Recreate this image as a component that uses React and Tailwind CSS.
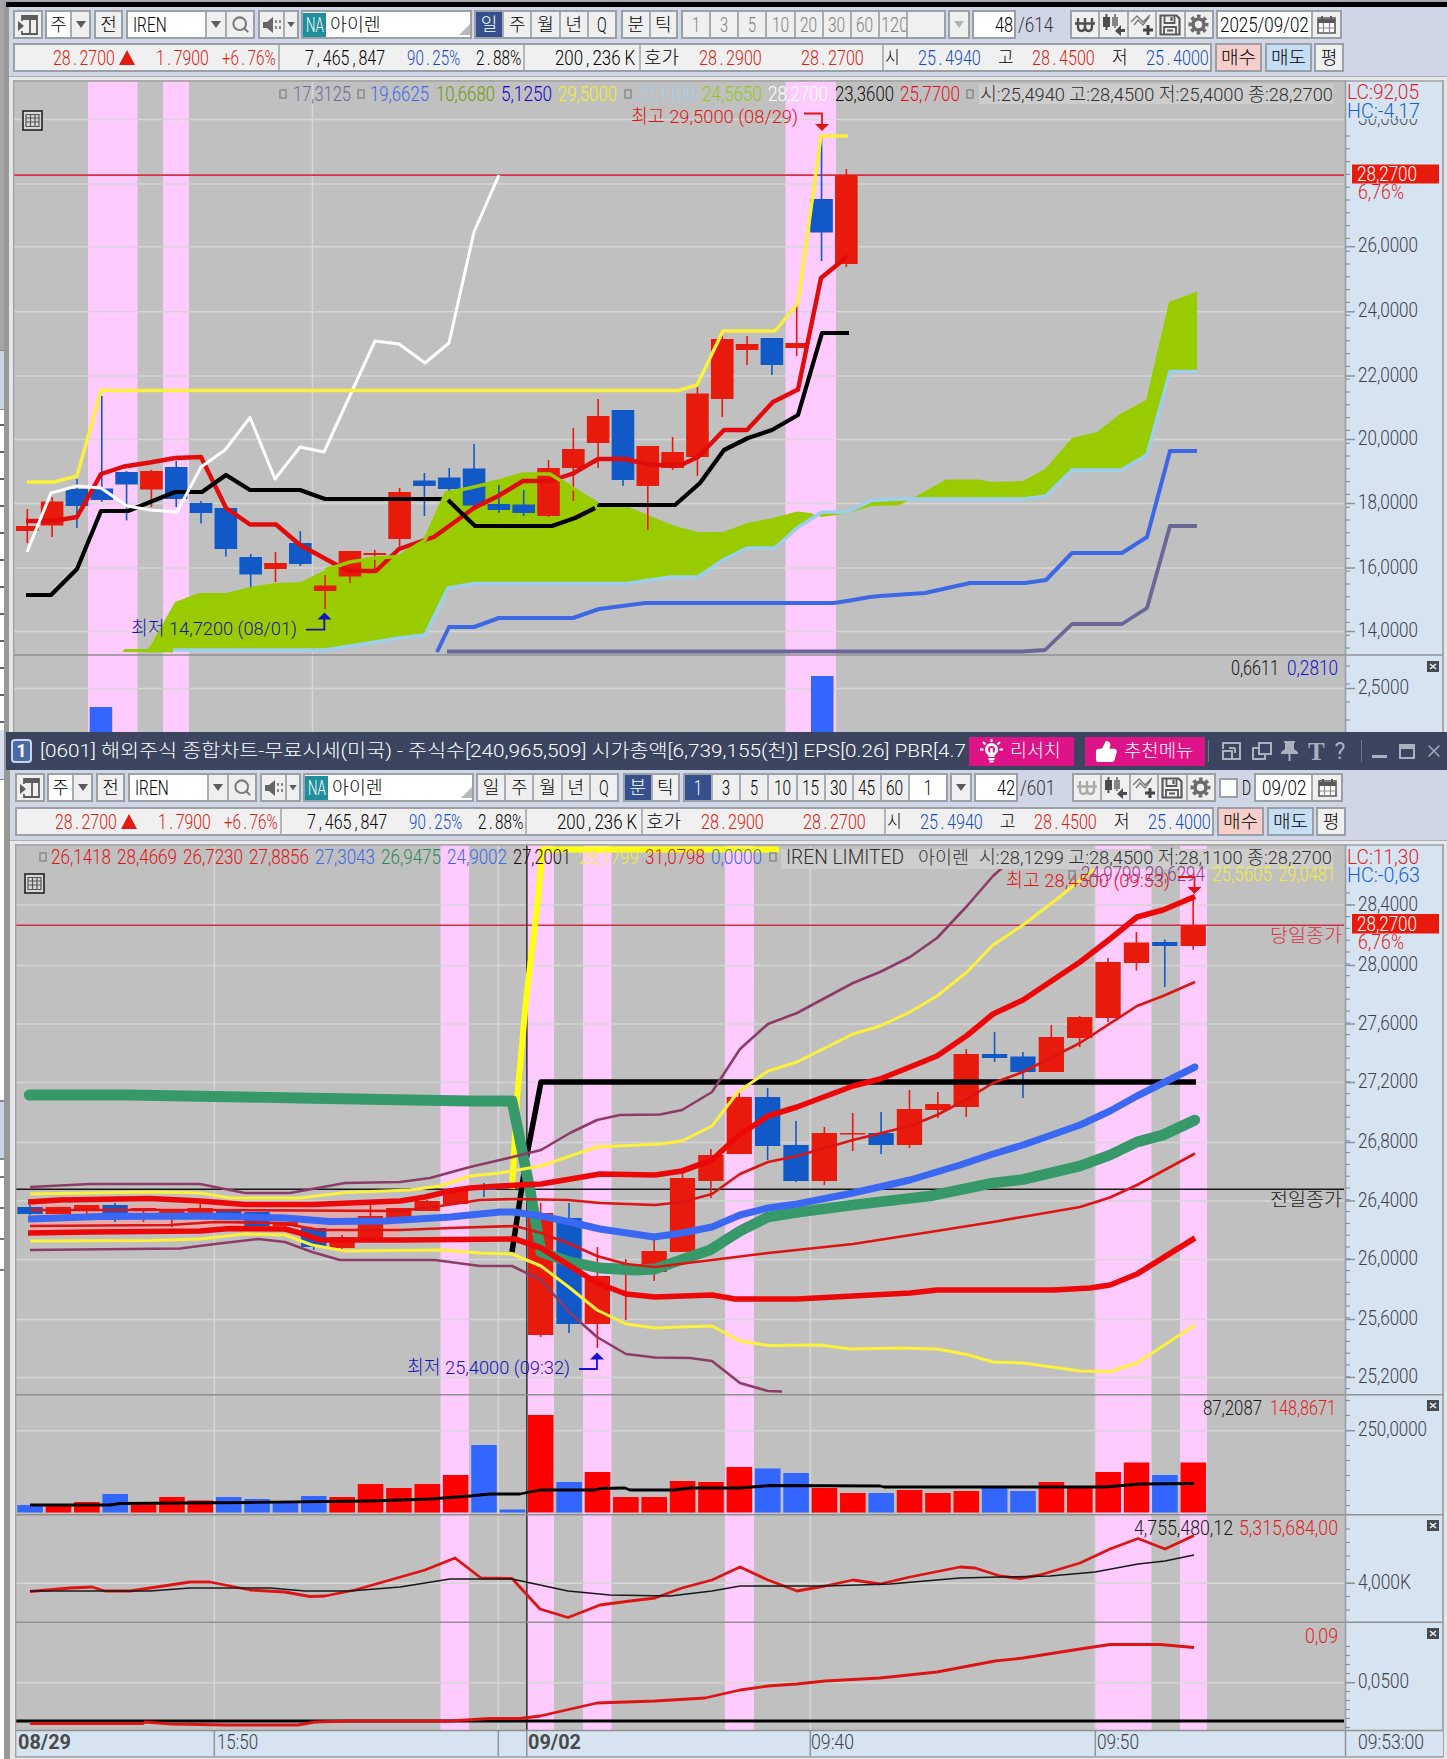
import React, { useLayoutEffect, useRef, useState } from "react";
import { Search, ThumbsUp, X } from "lucide-react";
import clsx from "clsx";

const FONT = "font-['Roboto','Noto_Sans_CJK_KR',sans-serif] font-light";
const RED = "#e81a0c";
const BLUE = "#1259c8";

/* Text squeezed into the width of its box; mono gives points and commas a full digit cell */
function Fit({ className, children, size = "text-[20px]", mono }) {
  const box = useRef(null);
  const span = useRef(null);
  const [scale, setScale] = useState(1);
  useLayoutEffect(() => {
    setScale(box.current.clientWidth / span.current.offsetWidth);
  }, [children]);
  const content = mono
    ? children.split(/([.,])/).map((s, i) => (s === "." || s === "," ? <span key={i} className="inline-block w-[0.56em] text-center">{s}</span> : s))
    : children;
  return (
    <div ref={box} className={clsx("shrink-0 h-full flex items-center", className)}>
      <span ref={span} className={clsx("whitespace-pre origin-left leading-none", size)} style={{ transform: `scaleX(${scale})` }}>
        {content}
      </span>
    </div>
  );
}

function Group({ className, children }) {
  return (
    <div className={clsx("shrink-0 h-[29px] flex border-2 border-[#9b9fa6] divide-x-2 divide-[#a9acb2] bg-[#efefef] overflow-hidden", className)}>
      {children}
    </div>
  );
}

function Cell({ className, on, children }) {
  return (
    <div className={clsx("flex items-center justify-center overflow-hidden", className || "flex-1", on && "bg-[#36508e] text-white")}>
      {children}
    </div>
  );
}

const Down = ({ dim }) => (
  <svg width="12" height="8" viewBox="0 0 12 8"><path d="M1 0h10L6 7z" fill={dim ? "#b4b4b4" : "#5c5c5c"} /></svg>
);

function PanelIcon() {
  return (
    <svg width="22" height="22" viewBox="0 0 22 22" fill="none" stroke="#5c5c5c" strokeWidth="1.800">
      <path d="M5 7V2h15v18H5v-3M13 5v15" />
      <path d="M5 4h15" strokeWidth="4" />
      <path d="M1 7v10l6-5z" fill="#5c5c5c" stroke="none" />
    </svg>
  );
}

function SpeakerIcon() {
  return (
    <svg width="20" height="18" viewBox="0 0 20 18">
      <path d="M1 6h4l6-5v16l-6-5H1z" fill="#666" />
      <path d="M13 4h2v3h-2zM17 4h2v3h-2zM13 10h2v3h-2zM17 10h2v3h-2z" fill="#8a8a8a" />
    </svg>
  );
}

function CalendarIcon() {
  return (
    <svg width="19" height="18" viewBox="0 0 19 18">
      <path d="M1 2h17v15H1z" fill="#fff" stroke="#5a5a5a" strokeWidth="1.600" />
      <path d="M1 3h17v4H1z" fill="#5a5a5a" />
      <path d="M1 12h17M6.500 7v10M12.500 7v10" stroke="#8a8a8a" strokeWidth="1.200" />
      <path d="M5 0v4M14 0v4" stroke="#5a5a5a" strokeWidth="2" />
    </svg>
  );
}

function WonIcon({ dim }) {
  return (
    <svg width="22" height="18" viewBox="0 0 22 18" fill="none" stroke={dim ? "#aaa" : "#505050"} strokeWidth="2.400">
      <path d="M4 2v8q0 5 3.500 5T11 10V2M11 10q0 5 3.500 5T18 10V2M1 7.500h20" />
    </svg>
  );
}

function CandleIcon() {
  return (
    <svg width="24" height="23" viewBox="0 0 24 23">
      <path d="M1 4h7v10H1zM3.500 1h2v16h-2z" fill="#4c4c4c" />
      <path d="M10 4h6v9h-6zM12 1h2v14h-2z" fill="#858585" />
      <path d="M23 16h-4v-4l-6 6 6 5v-4h4z" fill="#4c4c4c" />
    </svg>
  );
}

function WaveIcon() {
  return (
    <svg width="24" height="23" viewBox="0 0 24 23" fill="none">
      <path d="M1 9l6-6 6 6 7-7M4 12l4-5 5 5 6-8" stroke="#777" strokeWidth="1.300" />
      <path d="M18 12v10M13 17h10" stroke="#444" strokeWidth="3" />
    </svg>
  );
}

function DiskIcon() {
  return (
    <svg width="22" height="22" viewBox="0 0 22 22" fill="none" stroke="#5a5a5a" strokeWidth="2.200">
      <path d="M1.500 1.500h16l3 3v16h-19z" />
      <path d="M5.500 2v7h10V2M5 20v-7h12v7M8 16.500h6" strokeWidth="1.800" />
      <path d="M12.500 3v4" />
    </svg>
  );
}

function GearIcon() {
  return (
    <svg width="21" height="21" viewBox="0 0 21 21" fill="none" stroke="#6a6a6a">
      <circle cx="10.500" cy="10.500" r="5.500" strokeWidth="3.600" />
      <circle cx="10.500" cy="10.500" r="8.400" strokeWidth="3.200" strokeDasharray="3.600 2.997" strokeDashoffset="1.800" />
    </svg>
  );
}

function BulbIcon() {
  return (
    <svg width="25" height="25" viewBox="0 0 25 25" fill="none" stroke="#fff" strokeWidth="2">
      <circle cx="12.500" cy="10.500" r="5" strokeWidth="3" />
      <path d="M9.500 17h6M9.500 20h6M10.500 22.500h4M12.500 0v3M1 10.500h3.500M20.500 10.500H24M4 3l2.500 2.500M21 3l-2.500 2.500" />
      <path d="M12.500 9v8" strokeWidth="2.600" />
    </svg>
  );
}

function Toolbar({ minute }) {
  const periods = ["일", "주", "월", "년", "Q"];
  const steps = minute ? ["1", "3", "5", "10", "15", "30", "45", "60"] : ["1", "3", "5", "10", "20", "30", "60", "120"];
  return (
    <div className="flex items-center text-[20px] text-black leading-none">
      <Group className="w-[30px]"><Cell><PanelIcon /></Cell></Group>
      <Group className="w-[46px] ml-[2px]">
        <Cell className="w-[25px] bg-white text-[18px]">주</Cell>
        <Cell><Down /></Cell>
      </Group>
      <Group className="w-[29px] ml-[3px]"><Cell className="w-full text-[18px]">전</Cell></Group>
      <Group className="w-[129px] ml-[3px]">
        <Cell className="w-[79px] bg-white justify-start!"><Fit className="w-[34px] ml-[5px]">IREN</Fit></Cell>
        <Cell className="w-[20px]"><Down /></Cell>
        <Cell><Search size={19} color="#7c7c7c" strokeWidth={2.6} /></Cell>
      </Group>
      <Group className="w-[41px] ml-[3px]">
        <Cell className="w-[25px]"><SpeakerIcon /></Cell>
        <Cell><div className="scale-75"><Down /></div></Cell>
      </Group>
      <Group className="w-[171px] ml-[2px] bg-white!">
        <div className="relative w-full flex items-center">
          <div className="w-[23px] h-[24px] bg-[#1f8f9b] text-white flex items-center"><Fit className="w-[18px] ml-[3px]">NA</Fit></div>
          <Fit className="w-[51px] ml-[4px]" size="text-[18px]">아이렌</Fit>
          <svg className="absolute right-0 bottom-0.5" width="11" height="11" viewBox="0 0 11 11"><path d="M11 0v11H0z" fill="#b8b8b8" /></svg>
        </div>
      </Group>
      <Group className="w-[143px] ml-[2px]">
        {periods.map((p, i) => (
          <Cell key={p} on={!minute && i === 0}>
            {p === "Q" ? <Fit className="w-[10px]">Q</Fit> : <span className="text-[18px]">{p}</span>}
          </Cell>
        ))}
      </Group>
      <Group className="w-[57px] ml-[4px] text-[18px]">
        <Cell on={minute}>분</Cell>
        <Cell>틱</Cell>
      </Group>
      <Group className={clsx("w-[265px] ml-[3px]", !minute && "text-[#808080]")}>
        {steps.map((s, i) => (
          <Cell key={s} on={minute && i === 0} className={s.length === 3 ? "flex-1 justify-start!" : undefined}>
            <Fit className={s.length === 3 ? "w-[27px] ml-px" : s.length === 2 ? "w-[17px]" : "w-[8px]"}>{s}</Fit>
          </Cell>
        ))}
        <Cell className={clsx("w-[36px]", minute && "bg-white")}>{minute && <Fit className="w-[8px]">1</Fit>}</Cell>
      </Group>
      <Group className="w-[22px] ml-[2px]"><Cell><Down dim={!minute} /></Cell></Group>
      <Group className="w-[44px] ml-[2px] bg-white!"><Fit className="w-[18px] ml-[21px]">{minute ? "42" : "48"}</Fit></Group>
      <Fit className="w-[35px] ml-[2px] text-[#333]">{minute ? "/601" : "/614"}</Fit>
      <Group className="w-[144px] ml-[17px]">
        <Cell><WonIcon dim={minute} /></Cell>
        <Cell><CandleIcon /></Cell>
        <Cell><WaveIcon /></Cell>
        <Cell><DiskIcon /></Cell>
        <Cell><GearIcon /></Cell>
      </Group>
      {minute ? (
        <>
          <div className="w-[19px] h-[20px] ml-[3px] bg-white border-2 border-[#9b9fa6]" />
          <Fit className="w-[9px] ml-[4px]">D</Fit>
          <Group className="w-[89px] ml-[3px]">
            <Cell className="w-[57px] bg-white"><Fit className="w-[44px]">09/02</Fit></Cell>
            <Cell><CalendarIcon /></Cell>
          </Group>
        </>
      ) : (
        <Group className="w-[126px] ml-[2px]">
          <Cell className="w-[95px] bg-white"><Fit className="w-[89px]">2025/09/02</Fit></Cell>
          <Cell><CalendarIcon /></Cell>
        </Group>
      )}
    </div>
  );
}

function QuoteRow() {
  const sep = "w-[2px] h-full bg-[#b2b5ba] shrink-0";
  return (
    <div className="flex mt-[4px] h-[29px]">
      <div className="w-[1199px] h-[29px] flex items-center border-2 border-[#9b9fa6] bg-[#f0f0f0] text-black">
        <Fit mono className="w-[62px] ml-[38px] text-[#dc2010]">28.2700</Fit>
        <svg className="ml-[4px] shrink-0" width="16" height="15" viewBox="0 0 16 15"><path d="M8 0l8 15H0z" fill="#e01c10" /></svg>
        <Fit mono className="w-[53px] ml-[21px] text-[#dc2010]">1.7900</Fit>
        <Fit mono className="w-[54px] ml-[13px] text-[#dc2010]">+6.76%</Fit>
        <div className={clsx(sep, "ml-[2px]")} />
        <Fit mono className="w-[80px] ml-[25px]">7,465,847</Fit>
        <Fit mono className="w-[53px] ml-[22px] text-[#144cc8]">90.25%</Fit>
        <Fit mono className="w-[45px] ml-[16px]">2.88%</Fit>
        <div className={clsx(sep, "ml-[2px]")} />
        <Fit mono className="w-[80px] ml-[30px]">200,236 K</Fit>
        <div className={clsx(sep, "ml-[4px]")} />
        <Fit className="w-[35px] ml-[3px]" size="text-[18px]">호가</Fit>
        <Fit mono className="w-[63px] ml-[20px] text-[#dc2010]">28.2900</Fit>
        <Fit mono className="w-[63px] ml-[39px] text-[#dc2010]">28.2700</Fit>
        <div className={clsx(sep, "ml-[18px]")} />
        <Fit className="w-[15px] ml-[1px]" size="text-[18px]">시</Fit>
        <Fit mono className="w-[63px] ml-[18px] text-[#144cc8]">25.4940</Fit>
        <Fit className="w-[16px] ml-[17px]" size="text-[18px]">고</Fit>
        <Fit mono className="w-[63px] ml-[18px] text-[#dc2010]">28.4500</Fit>
        <Fit className="w-[16px] ml-[17px]" size="text-[18px]">저</Fit>
        <Fit mono className="w-[63px] ml-[18px] text-[#144cc8]">25.4000</Fit>
      </div>
      <Group className="w-[47px] ml-[3px] bg-[#f6cfca]!"><Cell><Fit className="w-[35px]" size="text-[18px]">매수</Fit></Cell></Group>
      <Group className="w-[47px] ml-[3px] bg-[#c5def4]!"><Cell><Fit className="w-[35px]" size="text-[18px]">매도</Fit></Cell></Group>
      <Group className="w-[30px] ml-[2px]"><Cell><span className="text-[18px] leading-none">평</span></Cell></Group>
    </div>
  );
}

/* ---- chart primitives ---- */

function T({ x, y, w, c = "#303030", b, size = 20, children }) {
  return (
    <text x={x} y={y} textLength={w} lengthAdjust="spacingAndGlyphs" fill={c} fontSize={size} fontWeight={b ? 700 : 300} xmlSpace="preserve">
      {children}
    </text>
  );
}

const Line = ({ p, c, w = 2 }) => (
  <polyline points={p} fill="none" stroke={c} strokeWidth={w} strokeLinejoin="round" />
);

const Square = ({ x, y }) => <rect x={x + 1} y={y} width="6" height="8" fill="none" stroke="#8a8a8a" strokeWidth="1.500" />;

function CloseBox({ y }) {
  return (
    <g>
      <rect x="1427" y={y} width="12" height="11" fill="#444a50" />
      <path d={`M1430 ${y + 3}l6 5M1436 ${y + 3}l-6 5`} stroke="#e8eef4" strokeWidth="1.600" />
    </g>
  );
}

function TableIcon({ x, y }) {
  return (
    <g transform={`translate(${x} ${y})`}>
      <rect x="1" y="1" width="19" height="19" fill="#d8d8d8" stroke="#222" strokeWidth="1.600" />
      <path d="M4 4.500h13v12H4zM4 8h13M4 12h13M8.500 4v13M13 4v13" fill="none" stroke="#555" strokeWidth="1.200" />
    </g>
  );
}

function Candles({ data, x0, step, width }) {
  return data.map(([col, top, bottom, high, low], i) => {
    if (!col) return null;
    const x = x0 + step * i;
    const fill = col === "r" ? RED : BLUE;
    return (
      <g key={i} fill={fill}>
        <rect x={x - 0.8} y={high} width="1.600" height={low - high} />
        <rect x={x - width / 2} y={top} width={width} height={bottom - top} />
      </g>
    );
  });
}

function Ticks({ from, to, step }) {
  const ys = [];
  for (let y = from; y < to; y += step) ys.push(y);
  return ys.map((y) => <path key={y} d={`M1346 ${y}h4`} stroke="#8c9299" strokeWidth="1.200" />);
}

function AxisLabel({ y, w = 60, children }) {
  return (
    <g>
      <path d={`M1346 ${y}h9`} stroke="#8c9299" strokeWidth="1.500" />
      <T x={1358} y={y + 5.5} w={w} c="#3c4248">{children}</T>
    </g>
  );
}

const weekly = [
  ["r", 526, 531, 509, 543], ["r", 501.5, 525.5, 497, 537], ["b", 489, 506, 479, 528], ["b", 488.5, 500, 396, 502],
  ["b", 472, 484.5, 471, 520.5], ["r", 471, 489.5, 470, 507], ["b", 467, 499, 461, 507], ["b", 503, 513, 501, 523.5],
  ["b", 508, 549, 508, 556.5], ["b", 557, 574.5, 554, 587], ["r", 563, 569, 552, 582], ["b", 543, 564, 531, 566],
  ["r", 585.5, 591, 575, 609], ["r", 551, 576.5, 551, 583], ["r", 553, 555, 550, 569], ["r", 492, 539, 488, 547],
  ["b", 480.5, 486, 473, 516], ["b", 477.5, 489, 468, 491], ["b", 468.5, 505.5, 444, 507], ["b", 504, 510, 485, 513],
  ["b", 504.5, 513, 490, 516], ["r", 468, 516, 460, 517], ["r", 449, 468, 428, 501], ["r", 416, 443, 399, 468],
  ["b", 410, 480, 410, 486], ["r", 446, 486, 446, 530], ["r", 452, 468, 437, 470], ["r", 393.5, 457, 387, 476],
  ["r", 339, 399, 335, 417], ["r", 344, 350, 336, 365], ["b", 338, 365, 338, 375], ["r", 343, 348, 305, 356],
  ["b", 199, 232.5, 137, 261], ["r", 175, 264, 169, 267],
];

const cloudTop =
  "122,652 125,649 148,649 152,643 175,602 199,593 226,593 250,587 275,583 301,582 325,570 350,562 375,558 399,556.5 425,540 446,493 474,487 499,481 523,473.500 550,473.500 574,489 598,504 624,505 650,516 675,526 698,532 723,532 747,523 773,518 797,511.500 810,513 822,517 847,513.500 872,506 899,505.500 920,494 946,479.500 978,479.500 992,482 1023,481 1045,469 1072,438 1097,432 1120,414 1146,400 1169,302 1197,291.500";
const cloudBottom =
  "173,650 325,650 350,646 375,642 399,638 425,635 448,588 474,583.500 627,583.500 670,577 698,577 723,560 747,548 775,548 797,528 822,512 847,512 872,500.500 899,499 1023,499 1046,496 1072,470 1121,470 1147,455 1170,371.500 1197,371.500";

const topGrid = [[184, ""], [246.7, "26,0000"], [311.8, "24,0000"], [376, "22,0000"], [439.5, "20,0000"], [503.5, "18,0000"], [568, "16,0000"], [631.5, "14,0000"]];

const topLegend = [
  [293, 58, "#6f6b98", "17,3125"], [370, 59, "#3a6ae8", "19,6625"], [436, 59, "#6f9a00", "10,6680"], [501, 51, "#1400c8", "5,1250"],
  [558, 59, "#f4f02a", "29,5000"], [636, 60, "#9ed0ec", "22,1100"], [702, 60, "#94c810", "24,5650"], [768, 60, "#ffffff", "28,2700"],
  [835, 59, "#101010", "23,3600"], [900, 60, "#e01020", "25,7700"],
];

function WeeklyChart() {
  return (
    <svg className="block" width="1434" height="652" viewBox="13 80 1434 652">
      <rect x="13" y="80" width="1434" height="652" fill="#c0c0c0" />
      <rect x="1346" y="80" width="97" height="652" fill="#d6e3f1" />
      <rect x="1444" y="80" width="3" height="652" fill="#e6e6e6" />
      {[[88, 49.5], [163, 26], [785.5, 50.5]].map(([x, w]) => <rect key={x} x={x} y="81" width={w} height="651" fill="#fecbfe" />)}
      {[119.5, ...topGrid.map((g) => g[0]), 688.5].map((y) => <path key={y} d={`M14 ${y}H1344`} stroke="#d6d6d6" strokeWidth="1.500" />)}
      <path d="M312.500 81V732" stroke="#d6d6d6" strokeWidth="1.500" />
      <path d="M14 175.200H1344" stroke="#d8304a" strokeWidth="1.800" />

      <polygon points={`${cloudTop} ${cloudBottom.split(" ").reverse().join(" ")} 173,652.5`} fill="#99cc00" />
      <Line p={cloudBottom} c="#9ccfee" w={3.5} />
      <Candles data={weekly} x0={27.3} step={24.82} width={22.6} />
      <Line c="#3c68e4" w={4} p="437,652 449,627 474,627 499,618 573,618 599,609 645,603 834,603 850,600.500 870,597 880,596 925,593 970,583 1025,583 1046,580 1072,553 1122,553 1147,537 1170,451 1197,451" />
      <Line c="#6a6796" w={3.8} p="447,651.500 1022,651.500 1045,650 1072,624 1122,624 1147,608 1170,526 1197,526" />
      <Line c="#e00c0c" w={4.4} p="26,521 53,521 77,517 101,474 124,466.500 150,462.500 175,458 201,457 226,508 250,524.500 276,524.500 300,545 335,564 350,571 376,571 399,549 425,540 434,537 474,508 499,495.500 523,481 550,481 573,473.500 598,459 625,459 650,465 681,465 698,457 724,430 747,430 773,402 798,389.500 821,278 848,256" />
      <Line c="#000" w={4.2} p="26,595 51,595 77,569 101,511 128,511 175,492 202,492 226,475 250,490 300,490 325,499 443,499" />
      <Line c="#000" w={4.2} p="448,500 475,526 552,526 575,518 595,508" />
      <Line c="#000" w={4.2} p="597,505 675,505 700,483 724,450 748,438 772,430 798,415 822,333 849,333" />
      <Line c="#fff" w={3} p="27,552 51,493 77,486 101,488 127,506 150,510 177,512 201,467 225,450 250,417.500 275,479 300,447 324,452 375,341 399,344 425,363 449,343 474,232 499,175" />
      <Line c="#99cc00" w={3.5} p="325,570 350,562 375,558 399,556.500 425,540 446,493 474,487 499,481 523,474 550,474 574,489 598,504" />
      <Line c="#fbf03a" w={3.4} p="27,482 54,482 77,476 101,390.500 678,390.500 697,385 723,331 775,331 798,303 821,136 848,136" />

      <path d="M14 655H1443" stroke="#909090" strokeWidth="1.600" />
      <rect x="89.700" y="707" width="22.500" height="25" fill="#3366ff" />
      <rect x="811" y="676" width="22.500" height="56" fill="#3366ff" />

      <rect x="979" y="84" width="354" height="20" fill="#cdcdcd" />
      {topLegend.map(([x, w, c, t]) => <T key={t} x={x} y={101} w={w} c={c}>{t}</T>)}
      {[279, 357, 624, 966].map((x) => <Square key={x} x={x} y={90} />)}
      <T x={980} y={101} w={353} size={19}>시:25,4940 고:28,4500 저:25,4000 종:28,2700</T>
      <T x={631} y={123} w={167} c="#e01414" size={19}>최고 29,5000 (08/29)</T>
      <path d="M804 113.500h18v11" fill="none" stroke="#e01414" strokeWidth="1.800" />
      <path d="M815 124h14l-7 7z" fill="#e01414" />
      <T x={131} y={634.5} w={166} c="#1512a8" size={19}>최저 14,7200 (08/01)</T>
      <path d="M306 629.700h18.300v-12" fill="none" stroke="#1512b8" strokeWidth="1.800" />
      <path d="M317.500 619.500h14l-7-7z" fill="#1512c8" />
      <TableIcon x={22} y={110} />
      <T x={1231} y={675} w={48} c="#101010">0,6611</T>
      <T x={1287} y={675} w={51} c="#1512d0">0,2810</T>

      <path d="M1345.500 80V732M1443 80V732" stroke="#9a9fa5" strokeWidth="1.600" />
      <Ticks from={136} to={655} step={12.8} />
      <Ticks from={666} to={732} step={18} />
      {topGrid.slice(1).map(([y, t]) => <AxisLabel key={t} y={y}>{t}</AxisLabel>)}
      <AxisLabel y={688.5} w={51}>2,5000</AxisLabel>
      <T x={1358} y={125} w={60} c="#50565c">30,0000</T>
      <rect x="1347" y="82" width="95" height="37" fill="#d6e3f1" />
      <T x={1347} y={99} w={72} c="#e01c1c">LC:92,05</T>
      <T x={1347} y={117.5} w={73} c="#1b5fd0">HC:-4,17</T>
      <rect x="1352" y="164.500" width="87" height="19" fill={RED} />
      <T x={1357} y={180.5} w={60} c="#fff">28,2700</T>
      <T x={1358} y={199} w={46} c="#e01c1c">6,76%</T>
      <CloseBox y={661} />
      <path d="M13 81H1443M13.600 80V732" stroke="#a2a2a2" strokeWidth="1.600" fill="none" />
    </svg>
  );
}

const minutes = [
  ["b", 1207, 1214, 1205, 1215], ["r", 1207, 1214, 1207, 1214], ["r", 1205, 1210, 1205, 1215], ["b", 1205, 1213, 1203, 1222],
  ["r", 1208, 1210, 1208, 1222], ["r", 1211, 1213, 1211, 1227], ["r", 1208, 1214, 1203, 1214], ["b", 1209, 1215, 1209, 1215],
  ["b", 1212, 1226, 1212, 1226], ["r", 1222, 1226, 1222, 1230], ["b", 1228, 1247, 1228, 1250], ["r", 1237, 1248, 1235, 1250],
  ["r", 1216, 1240, 1203, 1240], ["r", 1208, 1218, 1208, 1218], ["r", 1201, 1211, 1200, 1211], ["r", 1189, 1204, 1187, 1204],
  ["b", 1189, 1190, 1183, 1197], [], ["r", 1213, 1335, 1203, 1337], ["b", 1218, 1324, 1203, 1333],
  ["r", 1276, 1324, 1247, 1348], ["r", 1272, 1274, 1259, 1320], ["r", 1251, 1272, 1240, 1281], ["r", 1178, 1252, 1173, 1252],
  ["r", 1155, 1181, 1149, 1198], ["r", 1097, 1154, 1093, 1154], ["b", 1097, 1146, 1088, 1160], ["b", 1145, 1181, 1121, 1182],
  ["r", 1133, 1181, 1127, 1185], ["r", 1133, 1134.5, 1113, 1151], ["b", 1133, 1145, 1112, 1154], ["r", 1109, 1145, 1090, 1148],
  ["r", 1104, 1110, 1092, 1118], ["r", 1054, 1107, 1049, 1117], ["b", 1054, 1058, 1032, 1062], ["b", 1056.5, 1072, 1052, 1098],
  ["r", 1037, 1072, 1025, 1072], ["r", 1017, 1038, 1016, 1047], ["r", 962, 1018, 958, 1022], ["r", 942.5, 963, 932, 970.5],
  ["b", 942, 946, 939.5, 987], ["r", 925, 946, 896, 949.5],
];

const volumes = [
  1505, 1505, 1502, 1494, 1504, 1497, 1500.5, 1497, 1499, 1502, 1496, 1497, 1484, 1488, 1484, 1475, 1445, 1509.5, 1415, 1482, 1472,
  1497, 1497, 1481, 1482, 1467, 1468.5, 1473, 1488, 1493, 1493, 1490, 1493, 1491, 1488, 1491, 1482, 1487, 1472, 1462.5, 1475, 1462.5,
];
const blueVolumes = [0, 3, 7, 8, 9, 10, 16, 17, 19, 26, 27, 30, 34, 35, 40];

const priceGrid = [[905, "28,4000"], [965.5, "28,0000"], [1024, "27,6000"], [1082.5, "27,2000"], [1142.5, "26,8000"], [1201, "26,4000"], [1259.5, "26,0000"], [1319.5, "25,6000"], [1377.5, "25,2000"]];

const minuteLegend = [
  [51, 60, "#e01414", "26,1418"], [117, 60, "#e01414", "28,4669"], [183, 60, "#e01414", "26,7230"], [249, 60, "#e01414", "27,8856"],
  [315, 60, "#3a6ae8", "27,3043"], [381, 60, "#2c8a58", "26,9475"], [447, 60, "#3a6ae8", "24,9002"], [513, 58, "#101010", "27,2001"],
  [579, 60, "#f0ec48", "28,1799"], [645, 60, "#e01414", "31,0798"], [711, 51, "#3a6ae8", "0,0000"],
];

function MinuteChart() {
  return (
    <svg className="block" width="1432" height="915" viewBox="15 844 1432 915">
      <rect x="15" y="844" width="1432" height="915" fill="#c0c0c0" />
      <rect x="1346" y="844" width="97" height="887" fill="#d6e3f1" />
      <rect x="1444" y="844" width="3" height="915" fill="#e6e6e6" />
      {[[440.5, 28.5], [528, 26], [583, 28.5], [725, 29], [1095, 56.5], [1180, 27]].map(([x, w]) => (
        <rect key={x} x={x} y="845" width={w} height="885" fill="#fecbfe" />
      ))}
      {[...priceGrid.map((g) => g[0]), 1430.7, 1583.3, 1682.7].map((y) => <path key={y} d={`M16 ${y}H1344`} stroke="#d6d6d6" strokeWidth="1.500" />)}
      {[214.3, 498.3, 810.3, 1095.3].map((x) => <path key={x} d={`M${x} 845V1730`} stroke="#d6d6d6" strokeWidth="1.500" />)}
      <path d="M16 925.200H1344" stroke="#cf3048" strokeWidth="1.600" />
      <path d="M16 1189.200H1344" stroke="#181818" strokeWidth="1.600" />
      <path d="M526.800 845V1730" stroke="#403040" strokeWidth="1.500" />

      {/* tint between the bands on the quiet session */}
      <polygon points="30,1204 200,1204 300,1207 400,1204 400,1236 330,1236 290,1226 200,1228 30,1230" fill="#e4acac" />
      <Candles data={minutes} x0={30} step={28.37} width={25.3} />
      <Line c="#ffff10" w={6} p="512,1189 517,1100 526,1000 538,900 542.500,849.500 779,849.500" />
      <Line c="#000" w={5.5} p="512,1252 526,1160 541,1082 1196,1082" />
      <Line c="#37996a" w={10.8} p="28,1095 128,1095 300,1098 412,1100 470,1101 512,1101 520,1140 530,1190 541,1252 570,1262 600,1268 635,1270 655,1269 675,1262 710,1250 740,1231 768,1217 800,1212 853,1205 930,1196 993,1183 1023,1179.500 1080,1166 1110,1155 1137,1142 1163,1135 1195,1120" />
      <circle cx="29" cy="1095" r="5.200" fill="#37996a" />
      <circle cx="1195" cy="1120" r="5.200" fill="#37996a" />
      <Line c="#8c3c66" w={2.6} p="30,1187 90,1184 200,1184 245,1193 290,1193 345,1183 400,1182 430,1178 470,1167 500,1160 541,1150 570,1133 597,1120 620,1115 660,1114.500 682,1110 712,1092 740,1049 768,1024 797,1013 853,983 880,972 910,957 937,938 967,906 993,876 1002,868" />
      <Line c="#8c3c66" w={2.6} p="30,1250 180,1248.500 215,1244 258,1239 285,1242 312,1252 340,1260 435,1260 480,1266 512,1266 541,1280 570,1313 597,1337 626,1354 655,1357.500 690,1358 712,1361 740,1383 768,1391 782,1391.500" />
      <Line c="#fbf03a" w={3} p="30,1194 150,1192 200,1193 230,1198 300,1198 345,1192.500 410,1190 440,1186 470,1176 500,1173 541,1166 570,1156 597,1147 660,1144 682,1141 712,1126 738,1092 768,1071 797,1062 853,1034 880,1026 910,1012 937,996 967,972 993,945 1023,925 1057,899 1095,868" />
      <Line c="#fbf03a" w={3} p="30,1241 150,1240.500 200,1239 245,1234 285,1235 312,1245 345,1251 440,1250 480,1253 512,1254 541,1266 570,1288 597,1310 626,1324 655,1328 680,1327 712,1326 740,1341 768,1345.500 820,1345 850,1349 900,1348 937,1349 967,1354.500 993,1362 1023,1363 1080,1371 1110,1371.500 1137,1363 1195,1325" />
      <Line c="#ec0808" w={5.6} p="28,1202 60,1200 150,1198.500 200,1201 245,1204.500 312,1204.500 400,1201 425,1197 450,1191 470,1188 500,1186 541,1184 600,1174 655,1175 682,1171 712,1160 738,1136 768,1116 797,1107 853,1086 880,1079 910,1067 937,1056 967,1035.500 993,1014 1023,1000 1080,962 1110,939 1137,917 1163,910 1195,896.500" />
      <Line c="#ec0808" w={5.6} p="28,1233 90,1232 200,1231 230,1228.500 285,1229 300,1233 320,1240 400,1240 515,1239 541,1248 570,1266 597,1283 626,1294 655,1297 712,1295 735,1299 797,1299 853,1296 910,1293 937,1290 1053,1290 1090,1288 1110,1285 1137,1274 1195,1238" />
      <Line c="#dc1414" w={2.6} p="30,1210 200,1210 400,1211 440,1206 480,1200 515,1199 568,1200 600,1203 655,1205 682,1202 712,1194 740,1174 768,1162 797,1156 853,1140 910,1126 937,1115 967,1099 993,1083 1023,1072 1080,1043 1137,1006 1163,996 1195,982" />
      <Line c="#dc1414" w={2.6} p="30,1226 170,1225 215,1222 280,1223 320,1230 400,1230 450,1228 515,1226 541,1233 570,1244 597,1256 626,1264 655,1267 712,1260 768,1253 853,1244 930,1232 993,1222 1080,1207 1110,1197.500 1137,1185 1195,1153.500" />
      <Line c="#3b68f2" w={7} p="28,1219 100,1216.500 200,1216 285,1218 330,1221.500 385,1221 450,1217 500,1212 513,1212 541,1216 570,1222 600,1229 654,1237 682,1233 712,1227 740,1215 768,1208 797,1204 853,1193 910,1180 960,1165 993,1154 1023,1145 1080,1125 1110,1111 1137,1096 1163,1083 1195,1067" />
      <circle cx="1195" cy="1067" r="3.400" fill="#3b68f2" />

      {/* volume */}
      {volumes.map((y, i) => (
        <rect key={i} x={30 + 28.37 * i - 12.7} y={y} width="25.600" height={1512.5 - y} fill={blueVolumes.includes(i) ? "#3366ff" : "#ff0000"} />
      ))}
      <Line c="#000" w={2.8} p="30,1505 110,1505 120,1503.500 250,1502.500 370,1501 430,1499 470,1496 490,1494 520,1494 540,1490 595,1490 600,1488.500 625,1488 630,1490 675,1490 690,1488 740,1488 770,1485.500 880,1486 884,1487 1105,1487 1140,1484 1194,1483.500" />

      {/* flow */}
      <Line c="#dc1414" w={2.8} p="30,1591.500 70,1588 92,1587 105,1591 130,1591 170,1585 190,1582 210,1582 250,1590 285,1592 310,1596.500 325,1596 355,1590 390,1580 425,1570 455,1558 481,1578 512,1578.500 540,1609 568,1617.500 600,1605 630,1601 655,1598 682,1588 712,1580 740,1567 768,1580 797,1591 825,1586 853,1580 880,1584 910,1577 960,1567 975,1568 1000,1576 1020,1578.500 1040,1575 1080,1563 1110,1549 1138,1538.500 1165,1549 1194,1535.500" />
      <Line c="#181818" w={1.5} p="30,1591 150,1591 190,1588 270,1588 305,1591 350,1591 400,1587 450,1579 512,1579 568,1591 610,1595 670,1596 712,1591 740,1586 825,1586 890,1584 960,1578 1000,1577 1050,1576 1095,1572 1138,1564 1165,1561 1194,1555" />

      <path d="M16 1721H1344" stroke="#000" strokeWidth="3" />
      <Line c="#dc1414" w={2.8} p="30,1723.500 143,1723.500 145,1722 172,1724 228,1725 298,1725 315,1722 350,1721 450,1721 490,1718.500 520,1718.500 540,1716 597,1703 655,1701 705,1698 740,1690 768,1686 797,1684 825,1681 880,1678 937,1672 995,1661 1023,1658 1080,1649 1110,1644.500 1160,1644.500 1194,1647.500" />

      {[1394.7, 1514.7, 1622.3, 1730.5].map((y) => <path key={y} d={`M15 ${y}H1443`} stroke="#909090" strokeWidth="1.600" />)}

      {/* legends */}
      <rect x="781" y="849" width="552" height="20" fill="#cdcdcd" />
      {minuteLegend.map(([x, w, c, t]) => <T key={t} x={x} y={864} w={w} c={c}>{t}</T>)}
      <Square x={39} y={853} />
      <Square x={769} y={853} />
      <T x={786} y={864} w={118}>IREN LIMITED</T>
      <T x={918} y={864} w={51} size={18}>아이렌</T>
      <T x={979} y={864} w={353} size={19}>시:28,1299 고:28,4500 저:28,1100 종:28,2700</T>
      <T x={1006} y={886.5} w={164} c="#e01414" size={19}>최고 28,4500 (09:53)</T>
      <Square x={1068} y={871} />
      <T x={1081} y={881} w={124} c="#8c3c80">24,9799 29,6294</T>
      <T x={1212} y={881} w={60} c="#f0ec38">25,5605</T>
      <T x={1278} y={881} w={58} c="#f0ec38">29,0481</T>
      <path d="M1178 877h16.500v10" fill="none" stroke="#e01414" strokeWidth="1.800" />
      <path d="M1187.500 887h14l-7 7z" fill="#e01414" />
      <T x={407} y={1374} w={163} c="#1512c0" size={19}>최저 25,4000 (09:32)</T>
      <path d="M579 1369h18v-11" fill="none" stroke="#1512d0" strokeWidth="1.800" />
      <path d="M590 1359.500h14l-7-7z" fill="#1512d0" />
      <T x={1270} y={942} w={72} c="#dc3048" size={18}>당일종가</T>
      <T x={1270} y={1206} w={72} c="#181818" size={18}>전일종가</T>
      <TableIcon x={24} y={873} />
      <T x={1203} y={1415} w={59} c="#181818">87,2087</T>
      <T x={1270} y={1415} w={66} c="#e01c1c">148,8671</T>
      <T x={1134} y={1534.5} w={99} c="#181818">4,755,480,12</T>
      <T x={1239} y={1534.5} w={99} c="#e01c1c">5,315,684,00</T>
      <T x={1305} y={1642.5} w={33} c="#e01c1c">0,09</T>

      {/* right axis */}
      <path d="M1345.500 844V1757M1443 844V1757" stroke="#9a9fa5" strokeWidth="1.600" />
      <Ticks from={893} to={1394} step={11.8} />
      <Ticks from={1400.5} to={1514} step={15} />
      <Ticks from={1529} to={1622} step={13.5} />
      <Ticks from={1646.5} to={1730} step={9} />
      {priceGrid.map(([y, t]) => <AxisLabel key={t} y={y}>{t}</AxisLabel>)}
      <AxisLabel y={1430.7} w={69}>250,0000</AxisLabel>
      <AxisLabel y={1583.3} w={53}>4,000K</AxisLabel>
      <AxisLabel y={1682.7} w={51}>0,0500</AxisLabel>
      <T x={1347} y={864} w={72} c="#e01c1c">LC:11,30</T>
      <T x={1347} y={882} w={73} c="#1b5fd0">HC:-0,63</T>
      <rect x="1352" y="914" width="87" height="19.500" fill={RED} />
      <T x={1357} y={930.5} w={60} c="#fff">28,2700</T>
      <T x={1358} y={948.5} w={46} c="#e01c1c">6,76%</T>
      <CloseBox y={1400} />
      <CloseBox y={1520} />
      <CloseBox y={1628} />

      {/* time axis */}
      <rect x="16" y="1731.500" width="1427" height="25" fill="#d6e3f1" />
      {[214.3, 498.3, 526.8, 810.3, 1095.3, 1345.5].map((x) => <path key={x} d={`M${x} 1731v25`} stroke="#8f959b" strokeWidth="1.500" />)}
      <T x={18} y={1749} w={53} c="#4a4a4a" b>08/29</T>
      <T x={217} y={1749} w={41} c="#3c4248">15:50</T>
      <T x={528} y={1749} w={53} c="#4a4a4a" b>09/02</T>
      <T x={811} y={1749} w={43} c="#3c4248">09:40</T>
      <T x={1097} y={1749} w={42} c="#3c4248">09:50</T>
      <T x={1358} y={1749} w={66} c="#3c4248">09:53:00</T>
      <path d="M15 1757H1443" stroke="#9a9fa5" strokeWidth="1.600" />
      <rect x="15" y="1757.800" width="1432" height="2" fill="#ececec" />
      <path d="M15 845H1443M15.600 844V1757" stroke="#a2a2a2" strokeWidth="1.600" fill="none" />
    </svg>
  );
}

function TitleBar() {
  return (
    <div className="h-[38px] w-[1441px] bg-[#3b4560] flex items-center text-white">
      <div className="ml-[5px] w-[21px] h-[24px] rounded-[4px] border-2 border-[#c9d6ee] bg-[#4a6aa6] flex items-center justify-center font-bold text-[18px] leading-none shrink-0">1</div>
      <Fit className="w-[926px] ml-[8px]" size="text-[18px]">
        {"[0601] 해외주식 종합차트-무료시세(미국) - 주식수[240,965,509] 시가총액[6,739,155(천)] EPS[0.26] PBR[4.7"}
      </Fit>
      <div className="ml-[3px] w-[105px] h-[29px] bg-[#dc1488] flex items-center shrink-0">
        <div className="ml-[10px]"><BulbIcon /></div>
        <Fit className="w-[51px] ml-[6px]" size="text-[18px]">리서치</Fit>
      </div>
      <div className="ml-[11px] w-[120px] h-[29px] bg-[#dc1488] flex items-center shrink-0">
        <ThumbsUp size={23} fill="#fff" className="ml-[10px]" />
        <Fit className="w-[69px] ml-[6px]" size="text-[18px]">추천메뉴</Fit>
      </div>
      <div className="ml-[3px] w-px h-[22px] bg-[#6d7690]" />
      <svg className="ml-[13px] shrink-0" width="19" height="18" viewBox="0 0 19 18" fill="none" stroke="#aab0be" strokeWidth="2">
        <path d="M1 7V1h17v16h-7M1 9h9v8H1zM13 6H7M13 6v5" />
      </svg>
      <svg className="ml-[11px] shrink-0" width="20" height="18" viewBox="0 0 20 18" fill="none" stroke="#aab0be" strokeWidth="2">
        <path d="M7 1h12v11H7zM7 6H1v11h12v-5" />
      </svg>
      <svg className="ml-[9px] shrink-0" width="17" height="20" viewBox="0 0 17 20" fill="#aab0be">
        <path d="M3 0h11v2h-1v6l4 3v2H9.500v7h-2v-7H0v-2l4-3V2H3z" />
      </svg>
      <span className="ml-[10px] w-[16px] text-center font-['Liberation_Serif',serif] font-bold text-[25px] leading-none text-[#aab0be]">T</span>
      <span className="ml-[9px] w-[14px] text-center text-[23px] font-normal leading-none text-[#aab0be]">?</span>
      <div className="ml-[14px] w-px h-[22px] bg-[#6d7690]" />
      <div className="ml-[10px] mt-[11px] w-[15px] h-[3px] bg-[#aab0be]" />
      <div className="ml-[12px] w-[16px] h-[15px] border-2 border-t-[5px] border-[#aab0be]" />
      <X size={20} color="#aab0be" strokeWidth={1.6} className="ml-[9px] shrink-0" />
    </div>
  );
}

/* Edge of the window lying behind */
function LeftEdge() {
  return (
    <div className="w-[4px] h-full shrink-0 bg-white flex flex-col">
      <div className="h-[350px] bg-[#a6a6a6]" />
      <div className="h-[60px] bg-[#c9d3e4] border-y border-[#888]" />
      <div className="h-[320px] bg-[repeating-linear-gradient(#fff_0_14px,#666_14px_16px,#fff_16px_27px)]" />
      <div className="h-[50px] bg-[#d6e0f0] border-b border-[#888]" />
      <div className="h-[320px] bg-white" />
      <div className="h-[60px] bg-[#c9d3e4] border-y-2 border-[#888]" />
      <div className="h-[130px] bg-[repeating-linear-gradient(#fff_0_16px,#777_16px_18px,#fff_18px_31px)]" />
    </div>
  );
}

export default function App() {
  return (
    <div className={clsx("w-[1447px] h-[1759px] flex bg-[#989898] overflow-hidden", FONT)}>
      <LeftEdge />
      <div className="flex-1 min-w-0 flex flex-col">
        <div className="h-[2px] bg-[#a4a8ac]" />
        <div className="ml-[2px] h-[5px] bg-black" />
        <section className="ml-[5px] h-[725px] bg-[#e6e6e6] shrink-0">
          <div className="h-[69px] bg-[#d0d6e6] pt-[3px] pl-[4px]">
            <Toolbar />
            <QuoteRow />
          </div>
          <div className="h-[4px] bg-[#e9e9e9] border-t border-[#a9adb5]" />
          <div className="pl-[4px]">
            <WeeklyChart />
          </div>
        </section>
        <div className="ml-[2px]">
          <TitleBar />
        </div>
        <section className="ml-[6px] bg-[#e6e6e6] shrink-0">
          <div className="h-[70px] bg-[#d0d6e6] pt-[3px] pl-[5px]">
            <Toolbar minute />
            <div className="pt-px"><QuoteRow /></div>
          </div>
          <div className="h-[4px] bg-[#e9e9e9] border-t border-[#a9adb5]" />
          <div className="pl-[5px]">
            <MinuteChart />
          </div>
        </section>
      </div>
    </div>
  );
}
